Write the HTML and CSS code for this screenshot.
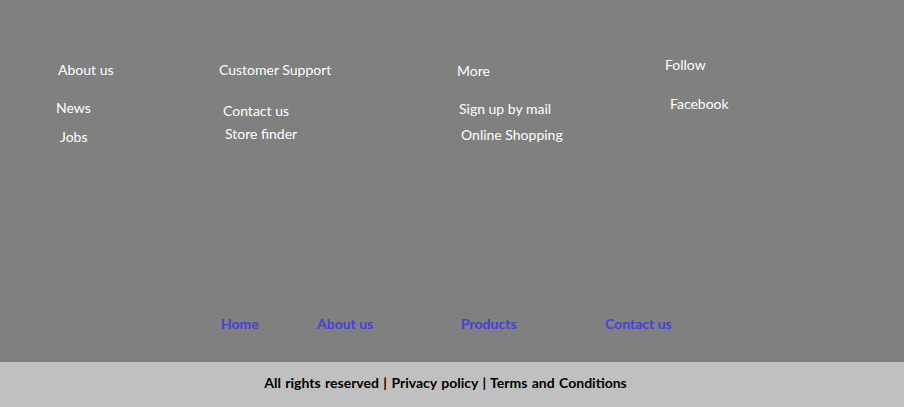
FILE: index.html
```html
<!DOCTYPE html>
<html lang="en">
<head>
<meta charset="utf-8">
<title>Footer</title>
<link rel="stylesheet" href="styles.css">
</head>
<body>
<div class="page">
  <div class="footer-top">
    <div class="columns">
      <div class="col col-about">
        <span class="head h-about">About us</span>
        <span class="item i-news">News</span>
        <span class="item i-jobs">Jobs</span>
      </div>
      <div class="col col-support">
        <span class="head h-support">Customer Support</span>
        <span class="item i-contact">Contact us</span>
        <span class="item i-store">Store finder</span>
      </div>
      <div class="col col-more">
        <span class="head h-more">More</span>
        <span class="item i-sign">Sign up by mail</span>
        <span class="item i-online">Online Shopping</span>
      </div>
      <div class="col col-follow">
        <span class="head h-follow">Follow</span>
        <span class="item i-facebook">Facebook</span>
      </div>
    </div>
    <nav class="bottom-nav">
      <a href="#">Home</a>
      <a href="#">About us</a>
      <a href="#">Products</a>
      <a href="#">Contact us</a>
    </nav>
  </div>
  <div class="footer-bar">All rights reserved | Privacy policy | Terms and Conditions</div>
</div>
</body>
</html>
```
FILE: styles.css
```css
html, body {
  margin: 0;
  padding: 0;
}
body {
  font-family: Lato, "Open Sans", sans-serif;
  font-size: 14px;
  line-height: 18px;
  background: #c0c0c0;
}
.page {
  width: 904px;
  height: 407px;
  display: flex;
  flex-direction: column;
}
.footer-top {
  height: 362px;
  background: #808080;
  color: #ffffff;
  display: flex;
  flex-direction: column;
}
.columns {
  display: flex;
  padding: 56px 0 0 56px;
}
.col {
  display: flex;
  flex-direction: column;
  align-items: flex-start;
}
.col-about { width: 163px; }
.col-support { width: 238px; }
.col-more { width: 208px; }
.col-follow { width: 120px; }

.h-about { margin: 5px 0 0 2px; }
.i-news { margin: 20px 0 0 0; }
.i-jobs { margin: 11px 0 0 4px; }

.h-support { margin: 5px 0 0 0; }
.i-contact { margin: 23px 0 0 4px; }
.i-store { margin: 5px 0 0 6px; }

.h-more { margin: 6px 0 0 0; }
.i-sign { margin: 20px 0 0 2px; }
.i-online { margin: 8px 0 0 4px; }

.h-follow { margin: 0; }
.i-facebook { margin: 21px 0 0 5px; }

.bottom-nav {
  margin-top: auto;
  margin-bottom: 29px;
  padding-left: 221px;
  display: grid;
  grid-template-columns: 96px 144px 144px auto;
}
.bottom-nav a {
  color: #4343d6;
  font-weight: bold;
  text-decoration: none;
}
.footer-bar {
  flex: 1;
  display: flex;
  align-items: center;
  justify-content: center;
  padding: 0 13px 4px 0;
  color: #000000;
  font-weight: bold;
  word-spacing: 1px;
}
```
